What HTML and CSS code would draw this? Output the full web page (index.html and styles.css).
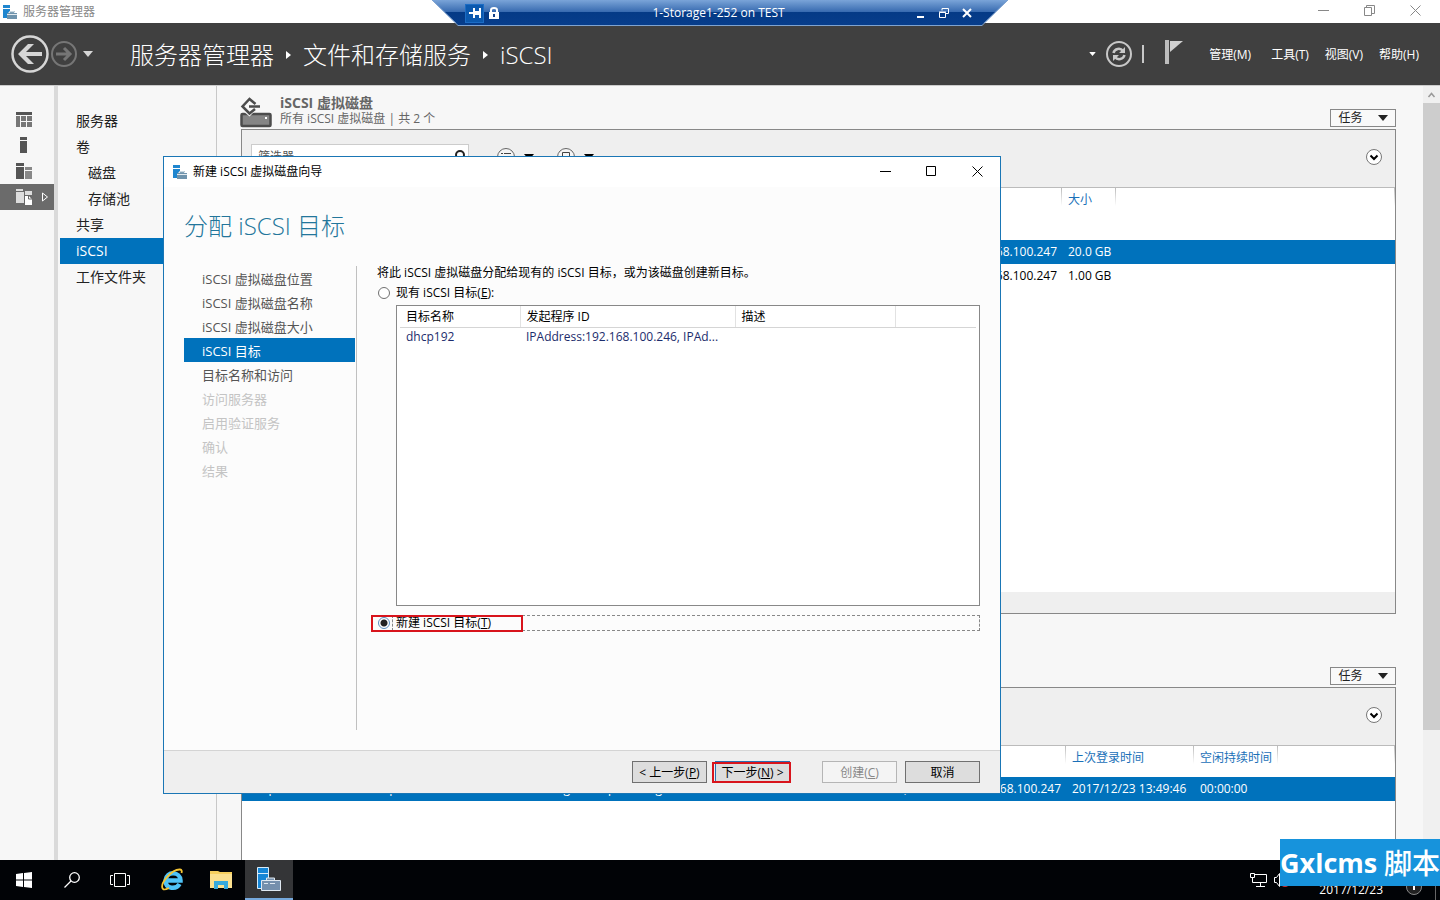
FILE: index.html
```html
<!DOCTYPE html>
<html lang="zh-CN">
<head>
<meta charset="utf-8">
<title>服务器管理器</title>
<link rel="stylesheet" href="styles.css">
</head>
<body>
<svg class="defs" aria-hidden="true">
  <symbol id="server" viewBox="0 0 14 14">
    <path fill="#1f86cf" d="M0 0h7v3H0zM0 4h7v2L4 9v4H0z"/>
    <path fill="#6f93ac" d="M4 8h2V6h6v2h2v6H4z"/>
    <path fill="none" stroke="#fff" stroke-width=".8" d="M4 9.500h10M6.500 8V6.700h5V8"/>
  </symbol>
  <symbol id="caret" viewBox="0 0 10 6"><path fill="currentColor" d="M0 0h10L5 6z"/></symbol>
  <symbol id="crumb" viewBox="0 0 5 8"><path fill="currentColor" d="M0 0l5 4-5 4z"/></symbol>
  <symbol id="expand" viewBox="0 0 16 16">
    <circle cx="8" cy="8" r="7.500" fill="#fff" stroke="#777"/>
    <path fill="none" stroke="#000" stroke-width="2" d="M4.500 6.500L8 10l3.500-3.500"/>
  </symbol>
</svg>

<div class="desktop">
  <header class="titlebar">
    <svg class="app-icon"><use href="#server"/></svg>
    <span class="titlebar-text">服务器管理器</span>
    <div class="window-buttons">
      <button aria-label="最小化"><svg width="11" height="11"><path d="M0 5.500h11"/></svg></button>
      <button aria-label="还原"><svg width="11" height="11"><path d="M.5 2.500h7v8h-7zM2.500 2.500v-2h8v8h-3"/></svg></button>
      <button aria-label="关闭"><svg width="11" height="11"><path d="M.5.5l10 10M10.500.5l-10 10"/></svg></button>
    </div>
  </header>

  <nav class="navbar">
    <button class="back" aria-label="后退"><svg width="38" height="38" viewBox="0 0 38 38"><circle cx="19" cy="19" r="17.500" fill="none" stroke="#d6d6d6" stroke-width="2.500"/><path fill="#d6d6d6" d="M7 19L17 9h6l-8 8h16v4H15l8 8h-6z"/></svg></button>
    <button class="forward" aria-label="前进"><svg width="26" height="26" viewBox="0 0 26 26"><g fill="none" stroke="#767676" stroke-width="2"><circle cx="13" cy="13" r="12"/><path stroke-width="3" d="M5 13h14M13 7l6 6-6 6"/></g></svg></button>
    <button class="history" aria-label="历史记录"><svg width="10" height="6"><use href="#caret"/></svg></button>
    <div class="crumbs">
      <a href="#">服务器管理器</a><svg width="5" height="8"><use href="#crumb"/></svg><a href="#">文件和存储服务</a><svg width="5" height="8"><use href="#crumb"/></svg><a href="#">iSCSI</a>
    </div>
    <div class="nav-tools">
      <button aria-label="更多"><svg width="7" height="4" viewBox="0 0 10 6"><use href="#caret"/></svg></button>
      <button aria-label="刷新"><svg width="26" height="26" viewBox="0 0 26 26"><g fill="none" stroke="#c8c8c8"><circle cx="13" cy="13" r="12" stroke-width="2"/><path stroke-width="2.500" d="M7.500 12c1-4.500 7-5.500 9.500-2M18.500 14c-1 4.500-7 5.500-9.500 2"/></g><path fill="#c8c8c8" d="M19 6v6h-6zM7 20v-6h6z"/></svg></button>
      <span class="nav-rule"></span>
      <button class="flag" aria-label="通知"><svg width="18" height="24" viewBox="0 0 18 24"><path fill="#bdbdbd" d="M0 0h4v24H0z"/><path fill="#d0d0d0" d="M5 1h13L5 12z"/></svg></button>
    </div>
    <div class="menus">
      <button class="wide">管理(M)</button><button>工具(T)</button><button>视图(V)</button><button>帮助(H)</button>
    </div>
  </nav>

  <div class="workspace">
    <div class="rail">
      <button aria-label="仪表板"><svg width="16" height="15"><path fill="#555" d="M0 0h16v3H0z"/><path fill="#777" d="M0 4h4v11H0zM5 4h5v5H5zM11 4h5v5h-5zM5 10h5v5H5zM11 10h5v5h-5z"/></svg></button>
      <button aria-label="本地服务器"><svg width="16" height="16"><path fill="#555" d="M4 0h7v3H4zM4 4h7v12H4z"/></svg></button>
      <button aria-label="所有服务器"><svg width="16" height="16"><path fill="#555" d="M0 0h8v3H0zM0 4h8v12H0z"/><path fill="#888" d="M9 4h7v3H9zM9 8h7v8H9z"/></svg></button>
      <button class="current" aria-label="文件和存储服务"><svg width="16" height="16"><path fill="#ddd" d="M0 0h7v2H0zM0 3h8v11H0zM9 2h7v4H9z"/><path fill="#fff" d="M9 7h4l3 3v6H9z"/><path fill="none" stroke="#666" d="M8.500 16V6.500h5l2.500 3M12.500 7v3H16"/></svg><svg class="rail-arrow" width="7" height="10"><path fill="none" stroke="#fff" d="M.5 1v8l5-4z"/></svg></button>
    </div>
    <nav class="sidebar">
      <a href="#">服务器</a>
      <a href="#">卷</a>
      <a href="#" class="sub">磁盘</a>
      <a href="#" class="sub">存储池</a>
      <a href="#">共享</a>
      <a href="#" class="current">iSCSI</a>
      <a href="#">工作文件夹</a>
    </nav>
    <main class="content">
      <section>
        <div class="section-head">
          <svg width="32" height="31" viewBox="0 0 32 31"><rect x="1.500" y="17" width="29" height="12" rx="1" fill="#858585" stroke="#4c4c4c" stroke-width="2.500"/><path fill="#fff" d="M25 20h2v2h-2z"/><path fill="#f7f7f7" d="M3 14h12l-5.500 5.500z"/><path fill="none" stroke="#4c4c4c" stroke-width="2.500" d="M15.500 7L9.500 2 2.500 9.500l7 7L15 12M9 9.500h11"/></svg>
          <div class="section-title"><h2>iSCSI 虚拟磁盘</h2><p>所有 iSCSI 虚拟磁盘 | 共 2 个</p></div>
          <button class="tasks">任务<svg width="10" height="6"><use href="#caret"/></svg></button>
        </div>
        <div class="panel">
          <div class="toolbar">
            <label class="search"><input type="text" placeholder="筛选器" aria-label="筛选器"><svg width="12" height="14"><g fill="none" stroke="#222" stroke-width="2"><circle cx="7" cy="5" r="4"/><path d="M4 8l-4 5"/></g></svg></label>
            <button class="tool" aria-label="条件"><svg width="18" height="18"><circle cx="9" cy="9" r="8.500" fill="#f5f5f5" stroke="#666"/><path stroke="#444" d="M4 5.500h2M7 5.500h7M4 8.500h2M7 8.500h7M4 11.500h2M7 11.500h7"/></svg><svg width="10" height="6"><use href="#caret"/></svg></button>
            <button class="tool" aria-label="保存"><svg width="18" height="18"><circle cx="9" cy="9" r="8.500" fill="#f5f5f5" stroke="#666"/><path fill="none" stroke="#444" d="M5.500 4.500h7v8h-7zM5.500 8.500h7"/></svg><svg width="10" height="6"><use href="#caret"/></svg></button>
            <button class="expander" aria-label="展开"><svg width="16" height="16"><use href="#expand"/></svg></button>
          </div>
          <div class="grid-area disks">
            <table class="grid">
              <colgroup><col class="c-disk"><col class="c-size"><col></colgroup>
              <thead><tr><th></th><th>大小</th><th></th></tr></thead>
              <tbody>
                <tr class="selected"><td class="end">192.168.100.247</td><td>20.0 GB</td><td></td></tr>
                <tr><td class="end">192.168.100.247</td><td>1.00 GB</td><td></td></tr>
              </tbody>
            </table>
          </div>
          <div class="panel-foot"></div>
        </div>
      </section>
      <section>
        <div class="section-head lower"><button class="tasks">任务<svg width="10" height="6"><use href="#caret"/></svg></button></div>
        <div class="panel">
          <div class="toolbar"><button class="expander" aria-label="展开"><svg width="16" height="16"><use href="#expand"/></svg></button></div>
          <div class="grid-area targets">
            <table class="grid">
              <colgroup><col class="c-name"><col class="c-iqn"><col class="c-addr"><col class="c-login"><col class="c-idle"><col></colgroup>
              <thead><tr><th></th><th></th><th></th><th>上次登录时间</th><th>空闲持续时间</th><th></th></tr></thead>
              <tbody>
                <tr class="selected"><td>dhcp192</td><td>iqn.1991-05.com.microsoft:storage1-dhcp192-target</td><td class="end">IPAddress:192.168.100.246, IPAddress:192.168.100.247</td><td>2017/12/23 13:49:46</td><td>00:00:00</td><td></td></tr>
              </tbody>
            </table>
          </div>
        </div>
      </section>
    </main>
    <div class="scrollbar"><svg width="17" height="17"><path fill="none" stroke="#999" stroke-width="1.500" d="M5.500 11l3-3.500 3 3.500"/></svg><div class="thumb"></div></div>
  </div>

  <footer class="taskbar">
    <button aria-label="开始"><svg width="16" height="16"><path fill="#fff" d="M0 2l7-1v6.500H0zM8 1l8-1v7.500H8zM0 8.500h7V15l-7-1zM8 8.500h8V16l-8-1z"/></svg></button>
    <button aria-label="搜索"><svg width="16" height="16"><g fill="none" stroke="#fff" stroke-width="1.300"><circle cx="10.500" cy="5.500" r="4.800"/><path d="M7 9l-6.500 6.500"/></g></svg></button>
    <button aria-label="任务视图"><svg width="20" height="14"><path fill="none" stroke="#fff" d="M4.500.5h11v13h-11zM3 2.500H.5v9H3M17 2.500h2.500v9H17"/></svg></button>
    <button class="app" aria-label="Internet Explorer"><svg width="24" height="24" viewBox="0 0 24 24"><path fill="none" stroke="#4fc3f7" stroke-width="4.500" d="M5.500 12.500h15c0-9-14-10-15 0 0 9 11 9 14 3.500"/><path fill="none" stroke="#f4c534" stroke-width="1.800" d="M3 21C-1 16 12 1 20 1.500c2 .2 2 2 1.500 3.500M3 21c1 1 4 0 6-1"/></svg></button>
    <button class="app" aria-label="文件资源管理器"><svg width="22" height="18"><path fill="#f6cf5e" d="M0 0h8l2 1h12v4H0z"/><path fill="#fbe08f" d="M0 3h22v14H0z"/><path fill="#36a9dc" d="M4 10h14v8h-4v-4H8v4H4z"/></svg></button>
    <button class="app active" aria-label="服务器管理器"><svg width="26" height="24"><path fill="#1686d6" stroke="#d8ecfa" d="M1.500.5h11v21h-11zM1.500 6.500h11"/><path fill="#7590ad" stroke="#dfe8f0" d="M5.500 13.500h19v10h-19zM10.500 13v-2h8v2"/><path stroke="#dfe8f0" d="M8 16.500h4M14 16.500h5"/></svg></button>
    <div class="tray">
      <svg width="17" height="14"><path fill="none" stroke="#fff" d="M5 1.500h11.500v8H5M.5.5h4v4h-4zM2.500 5v4.500H7M10.500 10v3M6 13.500h9"/></svg>
      <svg class="speaker" width="16" height="14"><path fill="none" stroke="#fff" d="M.5 4.500h2l3-4v13l-3-4h-2z"/><circle cx="11" cy="10" r="4" fill="#d32f2f"/></svg>
      <time class="date">2017/12/23</time>
      <svg class="notice" width="18" height="18"><circle cx="9" cy="9" r="7.500" fill="#222" stroke="#888"/><path stroke="#fff" stroke-width="2" d="M9 4v8"/></svg>
      <span class="show-desktop"></span>
    </div>
  </footer>

  <div class="remote-bar">
    <svg class="remote-shape" viewBox="0 0 576 27" preserveAspectRatio="none" aria-hidden="true">
      <defs><linearGradient id="sky" x1="0" y1="0" x2="0" y2="1"><stop offset="0" stop-color="#7aa4d8"/><stop offset=".47" stop-color="#386bb0"/><stop offset=".48" stop-color="#043a86"/><stop offset="1" stop-color="#073d8b"/></linearGradient></defs>
      <path fill="url(#sky)" d="M0 0h576l-26 25H26z"/><path fill="none" stroke="#7fa3d0" d="M0 0l26 25.500h524L576 0"/>
    </svg>
    <div class="remote-left">
      <button class="pin" aria-label="固定"><svg width="12" height="10"><path fill="#fff" d="M0 4h4V0h2v3h4V0h2v10h-2V7H6v3H4V6H0z"/></svg></button>
      <svg width="10" height="12"><path fill="#fff" d="M0 5h10v7H0z"/><path fill="none" stroke="#fff" stroke-width="2" d="M2 6V3q0-2 3-2t3 2v3"/><path fill="#123f88" d="M4 7h2v3H4z"/></svg>
    </div>
    <span>1-Storage1-252 on TEST</span>
    <div class="remote-right">
      <button aria-label="最小化连接"><svg width="10" height="10"><path fill="#fff" d="M1 8h7v2H1z"/></svg></button>
      <button aria-label="还原连接"><svg width="10" height="10"><path fill="none" stroke="#fff" d="M3 2.500V.5h6.500v5H7"/><path fill="none" stroke="#fff" d="M.5 4.500h6v5h-6zM0 4h7"/></svg></button>
      <button aria-label="断开连接"><svg width="10" height="10"><path stroke="#fff" stroke-width="2" d="M1 1l8 8M9 1L1 9"/></svg></button>
    </div>
  </div>

  <div class="dialog" role="dialog" aria-labelledby="wizard-title">
    <div class="dialog-bar">
      <svg class="app-icon"><use href="#server"/></svg>
      <span id="wizard-title">新建 iSCSI 虚拟磁盘向导</span>
      <div class="window-buttons dark">
        <button aria-label="最小化向导"><svg width="11" height="11"><path d="M0 5.500h11"/></svg></button>
        <button aria-label="最大化向导"><svg width="11" height="11"><path d="M.5.5h9v9h-9z"/></svg></button>
        <button aria-label="关闭向导"><svg width="11" height="11"><path d="M.5.5l10 10M10.500.5l-10 10"/></svg></button>
      </div>
    </div>
    <h1>分配 iSCSI 目标</h1>
    <div class="wizard">
      <ol class="steps">
        <li>iSCSI 虚拟磁盘位置</li><li>iSCSI 虚拟磁盘名称</li><li>iSCSI 虚拟磁盘大小</li><li class="current">iSCSI 目标</li><li>目标名称和访问</li>
        <li class="off">访问服务器</li><li class="off">启用验证服务</li><li class="off">确认</li><li class="off">结果</li>
      </ol>
      <form class="wizard-form">
        <p>将此 iSCSI 虚拟磁盘分配给现有的 iSCSI 目标，或为该磁盘创建新目标。</p>
        <div class="choice"><input type="radio" name="target" id="existing"><label for="existing">现有 iSCSI 目标(<u>E</u>):</label></div>
        <div class="target-list">
          <table>
            <colgroup><col class="t-name"><col class="t-id"><col class="t-desc"><col></colgroup>
            <thead><tr><th>目标名称</th><th>发起程序 ID</th><th>描述</th><th></th></tr></thead>
            <tbody><tr><td>dhcp192</td><td>IPAddress:192.168.100.246, IPAd...</td><td></td><td></td></tr></tbody>
          </table>
        </div>
        <div class="choice marked"><input type="radio" name="target" id="fresh" checked><label for="fresh">新建 iSCSI 目标(<u>T</u>)</label></div>
      </form>
    </div>
    <div class="dialog-foot">
      <button>&lt; 上一步(<u>P</u>)</button>
      <button class="next">下一步(<u>N</u>) &gt;</button>
      <button class="create" disabled>创建(<u>C</u>)</button>
      <button>取消</button>
    </div>
  </div>

  <div class="watermark"><span>Gxlcms</span>脚本</div>
</div>
</body>
</html>
```
FILE: styles.css
```css
*, *::before { box-sizing: border-box; }
body { margin: 0; font: 12px/16px "Open Sans", "Noto Sans CJK SC", sans-serif; color: #000; }
button, input { font: inherit; color: inherit; }
button { margin: 0; padding: 0; border: 0; background: none; display: flex; align-items: center; justify-content: center; }
a { color: inherit; text-decoration: none; }
h1, h2, p, ol { margin: 0; padding: 0; }
svg { display: block; flex: none; }
u { text-underline-offset: 1px; }
.defs { position: absolute; width: 0; height: 0; }

.desktop { position: relative; display: flex; flex-direction: column; height: 100vh; overflow: hidden; background: #f7f7f7; }

.titlebar { display: flex; align-items: center; height: 23px; padding: 0 2px 0 3px; background: #fff; color: #888; }
.app-icon { width: 14px; height: 14px; margin-right: 6px; }
.window-buttons { display: flex; align-self: stretch; margin-left: auto; }
.window-buttons button { width: 46px; padding-bottom: 2px; }
.window-buttons path { fill: none; stroke: #888; }
.window-buttons.dark path { stroke: #000; }

.navbar { display: flex; align-items: center; height: 62px; padding: 0 21px 0 11px; background: #404040; color: #fff; }
.forward { margin-left: 2px; }
.history { margin: 0 37px 0 6px; color: #d6d6d6; }
.crumbs { display: flex; align-items: center; gap: 12px; padding-top: 2px; font-size: 24px; line-height: 32px; font-weight: 300; }
.nav-tools { display: flex; align-items: center; gap: 10px; margin-left: auto; }
.nav-rule { width: 2px; height: 18px; background: #c8c8c8; }
.flag { margin: 0 26px 4px 11px; }
.menus { display: flex; gap: 16px; padding-top: 2px; }
.menus .wide { margin-right: 4px; }

.workspace { display: flex; flex: 1; min-height: 0; border-top: 1px solid #ccc; }
.rail { width: 58px; padding-top: 20px; border-right: 4px solid #dadada; }
.rail button { position: relative; width: 54px; height: 26px; padding-right: 6px; }
.rail .current { background: #6b6b6b; }
.rail-arrow { position: absolute; right: 5px; }
.sidebar { display: flex; flex-direction: column; width: 159px; padding: 22px 0 0 2px; border-right: 1px solid #c8c8c8; font-size: 14px; line-height: 26px; color: #222; }
.sidebar a { padding-left: 16px; }
.sidebar .sub { padding-left: 28px; }
.sidebar .current { background: #0072bc; color: #fff; }

.content { flex: 1; min-width: 0; padding: 0 27px 0 24px; }
.section-head { display: flex; align-items: flex-start; gap: 8px; height: 43px; margin-left: -1px; padding-top: 11px; color: #666; }
.section-head.lower { height: 73px; align-items: flex-end; padding: 0 0 2px; }
.section-title { margin-top: -2px; }
.section-title h2 { font-size: 14px; line-height: 16px; }
.tasks { gap: 15px; width: 66px; height: 18px; margin: 12px 0 0 auto; border: 1px solid #888; background: #f9f9f9; color: #222; }
.panel { border: 1px solid #888; }
.toolbar { display: flex; align-items: center; height: 58px; padding: 0 13px 4px 9px; border-bottom: 1px solid #bbb; background: #efefef; }
.search { display: flex; align-items: center; width: 218px; height: 26px; margin-right: 28px; padding-right: 3px; border: 1px solid #ccc; background: #fff; }
.search input { flex: 1; min-width: 0; padding: 0 6px; border: 0; background: none; }
.search input::placeholder { color: #555; }
.tool { gap: 9px; margin-right: 23px; }
.expander { margin-left: auto; }
.grid-area { background: #fff; }
.disks { height: 404px; }
.targets { height: 120px; }
.panel-foot { height: 21px; background: #efefef; }
table { width: 100%; border-collapse: collapse; table-layout: fixed; }
th, td { text-align: left; font-weight: 400; white-space: nowrap; overflow: hidden; }
.grid th { height: 52px; padding: 4px 6px 0; vertical-align: top; color: #1a70b8; background: linear-gradient(#bbb, #fff) right top / 1px 18px no-repeat; }
.targets th { height: 31px; }
.grid td { height: 24px; padding: 0 0 0 6px; }
.grid .end { text-align: right; padding: 0 5px 0 6px; }
.grid .selected { background: #0072bc; color: #fff; }
.c-disk { width: 820px; }
.c-size { width: 54px; }
.c-name { width: 134px; }
.c-iqn { width: 310px; }
.c-addr { width: 380px; }
.c-login { width: 128px; }
.c-idle { width: 84px; }
.scrollbar { width: 17px; background: #f0f0f0; }
.thumb { height: 81%; background: #cdcdcd; }

.taskbar { display: flex; height: 40px; background: #010306; color: #fff; }
.taskbar button { width: 48px; }
.taskbar .app { width: 49px; }
.taskbar button:not(.app) + .app { margin-left: 3px; }
.taskbar .active { width: 48px; border-bottom: 2px solid #76a9dc; background: #343537; }
.tray { display: flex; align-items: center; margin-left: auto; }
.speaker { margin: 0 29px 0 7px; }
.date { align-self: flex-end; padding-bottom: 2px; }
.notice { align-self: flex-end; margin: 0 12px 4px 22px; }
.show-desktop { width: 5px; height: 100%; border-left: 1px solid #666; }

.remote-bar { position: absolute; top: 0; left: 50%; display: grid; grid-template-columns: 1fr auto 1fr; align-items: center; width: 576px; height: 26px; margin-left: -288px; padding: 0 36px 0 33px; color: #fff; }
.remote-bar > * { position: relative; }
.remote-bar .remote-shape { position: absolute; inset: 0; width: 100%; height: 27px; }
.remote-left, .remote-right { display: flex; align-items: center; gap: 5px; }
.pin { width: 19px; height: 19px; border: 1px solid #1c6cc4; background: #0c59ae; }
.remote-right { justify-content: flex-end; gap: 13px; }

.dialog { position: absolute; left: 163px; top: 156px; display: flex; flex-direction: column; width: 838px; height: 638px; border: 1px solid #1a76b5; background: #fcfcfc; }
.dialog-bar { display: flex; align-items: center; height: 30px; padding-left: 9px; background: #fff; }
.dialog h1 { padding: 23px 20px 24px; font-size: 24px; line-height: 32px; font-weight: 300; color: #23769b; }
.wizard { display: flex; flex: 1; margin-bottom: 20px; padding: 0 20px; }
.steps { width: 173px; padding-right: 1px; border-right: 1px solid #c0c0c0; list-style: none; font-size: 13px; line-height: 22px; color: #555; }
.steps li { padding: 2px 0 0 18px; }
.steps .current { background: #0072bc; color: #fff; }
.steps .off { color: #c4c4c4; }
.wizard-form { display: flex; flex: 1; flex-direction: column; min-width: 0; padding-left: 20px; }
.wizard-form p { margin: -1px 0 4px; }
.choice { position: relative; display: flex; align-items: center; gap: 2px; height: 16px; margin-left: 1px; }
.choice label { flex: 1; padding-left: 3px; line-height: 14px; border: 1px solid transparent; }
.choice input { appearance: none; width: 12px; height: 12px; margin: 0; border: 1px solid #707070; border-radius: 50%; background: #fff; }
.choice input:checked { border-color: #5a8fc0; background: radial-gradient(circle, #222 0 3px, #fff 4px); }
.marked label { border: 1px dashed #888; }
.marked::before { content: ""; position: absolute; left: -7px; top: 0; width: 152px; height: 17px; border: 2px solid #d8141c; }
.target-list { height: 301px; margin: 4px 0 9px 19px; padding: 0 3px; border: 1px solid #888; background: #fff; }
.target-list th { height: 21px; padding: 2px 5px 0 6px; border-bottom: 1px solid #d5d5d5; border-right: 1px solid #e2e2e2; }
.target-list th:last-child { border-right: 0; }
.target-list td { height: 20px; padding: 0 6px; color: #1c2c6c; }
.t-name { width: 120px; }
.t-id { width: 215px; }
.t-desc { width: 160px; }
.dialog-foot { display: flex; justify-content: flex-end; gap: 8px; height: 43px; padding: 10px 20px; border-top: 1px solid #d4d4d4; background: #efefef; }
.dialog-foot button { position: relative; width: 75px; height: 22px; padding-top: 2px; border: 1px solid #707070; background: #ddd; white-space: pre; }
.dialog-foot .next { border-color: #2a6fb0; }
.dialog-foot .next::before { content: ""; position: absolute; inset: 0 -2px -1px -4px; border: 2px solid #d8141c; }
.dialog-foot .create { margin-left: 24px; border-color: #b5b5b5; background: #f4f4f4; color: #888; }

.watermark { position: absolute; right: 0; bottom: 14px; display: flex; align-items: center; justify-content: space-between; width: 160px; height: 47px; background: #1793dc; color: #fff; font-size: 28px; line-height: 40px; font-weight: 500; white-space: nowrap; }
.watermark span { font-size: 27px; font-weight: 700; }
```
